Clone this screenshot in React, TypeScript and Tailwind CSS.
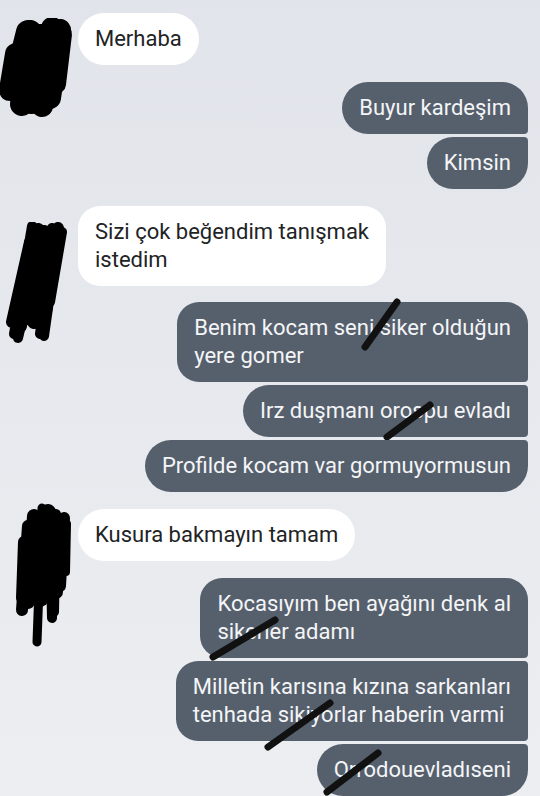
import React from 'react'

type Line = [number, number, number, number]

// scribble drawn over part of a message; coordinates measured from the bubble's top-right
const Strike = ({ line }: { line: Line }) => {
  const W = 300
  const [x1, y1, x2, y2] = line
  return (
    <svg
      className="pointer-events-none absolute right-0 top-0 overflow-visible"
      width={W}
      height={10}
    >
      <line
        x1={W + x1}
        y1={y1}
        x2={W + x2}
        y2={y2}
        stroke="#111"
        strokeWidth={7}
        strokeLinecap="round"
      />
    </svg>
  )
}

const Scribble = ({
  paths,
  width,
  height,
  className,
}: {
  paths: [string, number][]
  width: number
  height: number
  className: string
}) => (
  <svg className={className} width={width} height={height} viewBox={`0 0 ${width} ${height}`}>
    {paths.map(([d, w], i) => (
      <path key={i} d={d} stroke="#000" strokeWidth={w} strokeLinecap="round" fill="none" />
    ))}
  </svg>
)

const Incoming = ({
  lines,
  multi,
  avatar,
  className = '',
}: {
  lines: string[]
  multi?: boolean
  avatar?: React.ReactNode
  className?: string
}) => (
  <div className={`relative flex pl-[78px] ${className}`}>
    {avatar}
    <div
      className={`whitespace-nowrap bg-white px-[17px] py-3 text-[#222325] ${
        multi ? 'rounded-[22px]' : 'rounded-[26px]'
      }`}
    >
      {lines.map((l, i) => (
        <div key={i}>{l}</div>
      ))}
    </div>
  </div>
)

const Outgoing = ({
  lines,
  pos,
  strike,
  className = '',
}: {
  lines: string[]
  pos: 'first' | 'mid' | 'last'
  strike?: Line
  className?: string
}) => {
  const multi = lines.length > 1
  const round = multi ? 'rounded-[22px]' : 'rounded-[26px]'
  const corner =
    pos === 'first'
      ? 'rounded-br-[4px]'
      : pos === 'mid'
        ? 'rounded-tr-[4px] rounded-br-[4px]'
        : 'rounded-tr-[4px]'
  return (
    <div className={`flex justify-end ${className}`}>
      <div
        className={`relative whitespace-nowrap bg-[#56606d] px-[17px] py-3 text-[#f4f5f7] ${round} ${corner}`}
      >
        {lines.map((l, i) => (
          <div key={i}>{l}</div>
        ))}
        {strike && <Strike line={strike} />}
      </div>
    </div>
  )
}

export default function App() {
  return (
    <div className="flex min-h-[796px] flex-col bg-gradient-to-b from-[#e1e4ea] to-[#eceef1] pr-3 pt-[13px] font-['Roboto',sans-serif] text-[22px] leading-[28px]">
      <Incoming
        lines={['Merhaba']}
        avatar={
          <Scribble
            className="absolute left-0 top-[5px]"
            width={76}
            height={100}
            paths={[
              ['M28 14 L14 70', 24],
              ['M16 36 L10 72', 22],
              ['M30 14 L22 86', 24],
              ['M40 18 L32 84', 24],
              ['M52 10 L42 88', 22],
              ['M60 12 L50 80', 22],
              ['M62 16 L56 66', 20],
              ['M24 40 L44 60', 30],
            ]}
          />
        }
      />

      <Outgoing lines={['Buyur kardeşim']} pos="first" className="mt-[17px]" />
      <Outgoing lines={['Kimsin']} pos="last" className="mt-[3px]" />

      <Incoming
        lines={['Sizi çok beğendim tanışmak', 'istedim']}
        multi
        className="mt-[17px]"
        avatar={
          <Scribble
            className="absolute left-0 top-[16px]"
            width={76}
            height={122}
            paths={[
              ['M32 4 L14 112', 10],
              ['M38 8 L20 104', 14],
              ['M44 10 L28 96', 14],
              ['M52 6 L40 112', 10],
              ['M58 6 L46 90', 12],
              ['M62 10 L50 80', 10],
              ['M30 20 L12 100', 12],
              ['M36 40 L18 116', 10],
              ['M56 30 L44 114', 10],
              ['M48 14 L34 100', 14],
              ['M40 30 L30 90', 18],
            ]}
          />
        }
      />

      <Outgoing
        lines={['Benim kocam seni siker olduğun', 'yere gomer']}
        pos="first"
        className="mt-4"
        strike={[-163, 45, -131, 0]}
      />
      <Outgoing
        lines={['Irz duşmanı orospu evladı']}
        pos="mid"
        className="mt-[3px]"
        strike={[-141, 52, -98, 20]}
      />
      <Outgoing lines={['Profilde kocam var gormuyormusun']} pos="last" className="mt-[3px]" />

      <Incoming
        lines={['Kusura bakmayın tamam']}
        className="mt-[17px]"
        avatar={
          <Scribble
            className="absolute left-0 top-[-7px]"
            width={80}
            height={150}
            paths={[
              ['M42 6 L37 140', 9],
              ['M28 24 L22 108', 12],
              ['M34 14 L28 100', 14],
              ['M48 10 L44 90', 16],
              ['M56 12 L54 110', 10],
              ['M64 16 L60 84', 12],
              ['M67 22 L66 70', 8],
              ['M50 20 L52 116', 10],
              ['M24 40 L22 96', 12],
              ['M40 20 L40 96', 18],
              ['M56 20 L56 90', 14],
            ]}
          />
        }
      />

      <Outgoing
        lines={['Kocasıyım ben ayağını denk al', 'sikerler adamı']}
        pos="first"
        className="mt-[17px]"
        strike={[-315, 79, -253, 42]}
      />
      <Outgoing
        lines={['Milletin karısına kızına sarkanları', 'tenhada sikiyorlar haberin varmi']}
        pos="mid"
        className="mt-[3px]"
        strike={[-260, 86, -198, 42]}
      />
      <Outgoing
        lines={['Orrodouevladıseni']}
        pos="last"
        className="mt-[3px]"
        strike={[-201, 48, -150, 9]}
      />
    </div>
  )
}
